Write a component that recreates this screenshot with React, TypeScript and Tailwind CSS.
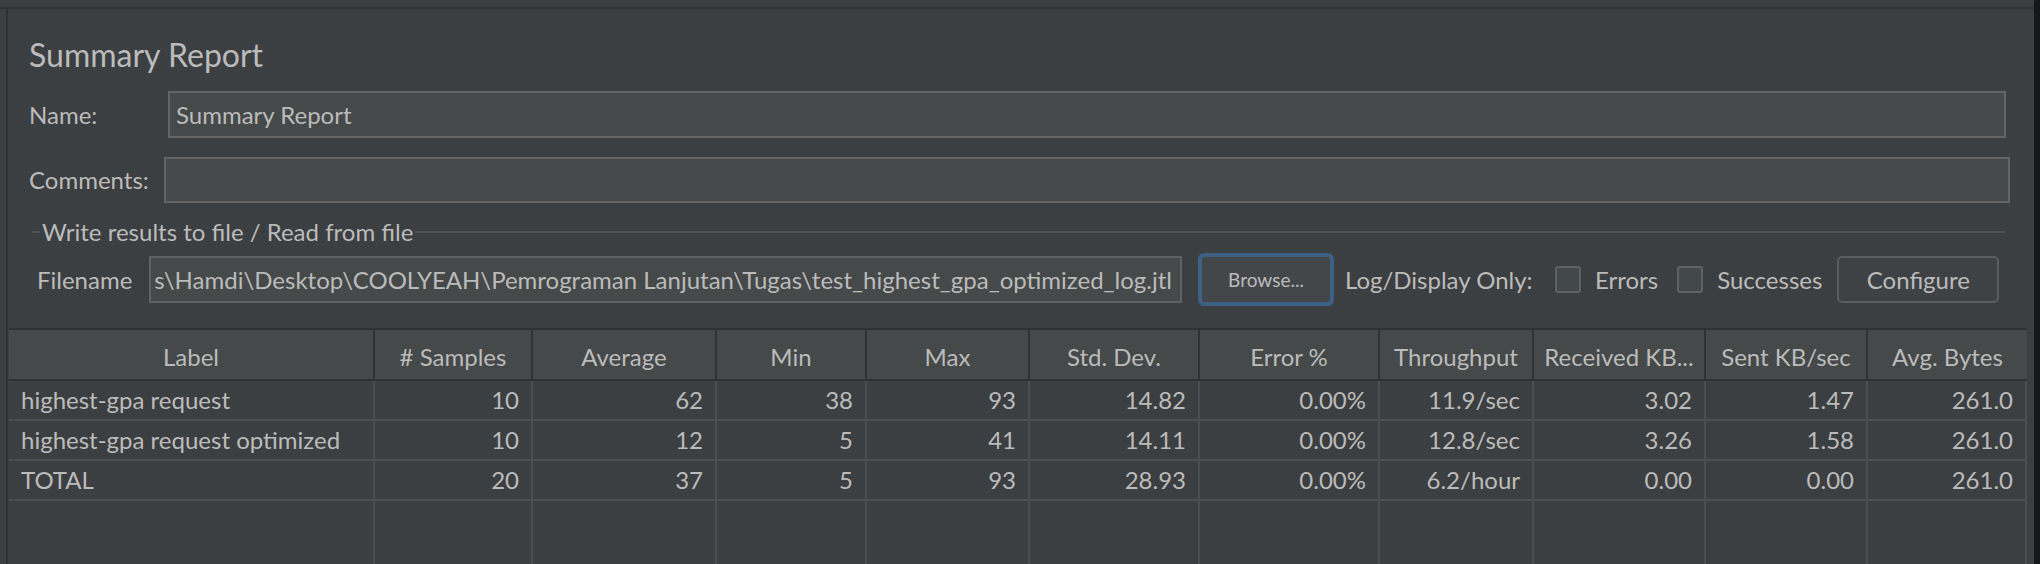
import React from 'react';

const columns = [
  { title: 'Label', width: 366 },
  { title: '# Samples', width: 158 },
  { title: 'Average', width: 184 },
  { title: 'Min', width: 150 },
  { title: 'Max', width: 163 },
  { title: 'Std. Dev.', width: 170 },
  { title: 'Error %', width: 180 },
  { title: 'Throughput', width: 154 },
  { title: 'Received KB...', width: 172 },
  { title: 'Sent KB/sec', width: 162 },
  { title: 'Avg. Bytes', width: 159 },
];

const rows = [
  ['highest-gpa request', '10', '62', '38', '93', '14.82', '0.00%', '11.9/sec', '3.02', '1.47', '261.0'],
  ['highest-gpa request optimized', '10', '12', '5', '41', '14.11', '0.00%', '12.8/sec', '3.26', '1.58', '261.0'],
  ['TOTAL', '20', '37', '5', '93', '28.93', '0.00%', '6.2/hour', '0.00', '0.00', '261.0'],
];

function Checkbox({ label }: { label: string }) {
  return (
    <div className="flex items-center">
      <span className="h-[27px] w-[26px] rounded-[3px] border-2 border-[#5e6265] bg-[#43494a]" />
      <span className="ml-[14px]">{label}</span>
    </div>
  );
}

export default function App() {
  return (
    <div
      className="flex h-[564px] w-[2040px] overflow-hidden bg-[#3c3f41] text-[24px] leading-none text-[#bbbbbb]"
      style={{ fontFamily: 'Lato, "Open Sans", sans-serif' }}
    >
      <div className="flex w-[2034px] flex-col">
        <div className="h-[7px]" />
        <div className="h-[2px] bg-[#2f3133]" />
        <div className="flex flex-1">
          <div className="w-[6px]" />
          <div className="flex flex-1 flex-col border-l-2 border-[#2f3133]">
            {/* title */}
            <div className="mt-[26px] flex h-[40px] items-center pl-[21px] text-[32px]">Summary Report</div>

            {/* name */}
            <div className="mt-[16px] flex h-[47px] items-center pl-[21px]">
              <span className="w-[139px]">Name:</span>
              <div className="flex h-full w-[1838px] items-center border-2 border-[#646464] bg-[#45494a] pl-[6px]">
                Summary Report
              </div>
            </div>

            {/* comments */}
            <div className="mt-[19px] flex h-[46px] items-center pl-[21px]">
              <span className="w-[135px]">Comments:</span>
              <div className="h-full w-[1846px] border-2 border-[#646464] bg-[#45494a]" />
            </div>

            {/* file group */}
            <div className="mt-[17px] flex h-[24px] items-center pl-[24px]">
              <span className="h-[2px] w-[8px] bg-[#515456]" />
              <span className="px-[2px]">Write results to file / Read from file</span>
              <span className="h-[2px] w-[1590px] bg-[#515456]" />
            </div>

            <div className="mt-[12px] flex h-[47px] items-center pl-[29px]">
              <span className="w-[112px]">Filename</span>
              <div className="flex h-full w-[1033px] items-center justify-end overflow-hidden whitespace-nowrap border-2 border-[#5f6162] bg-[#45494a] pr-[8px]">
                s\Hamdi\Desktop\COOLYEAH\Pemrograman Lanjutan\Tugas\test_highest_gpa_optimized_log.jtl
              </div>
              <button
                type="button"
                className="ml-[16px] flex h-[53px] w-[136px] items-center justify-center rounded-[6px] border-[4px] border-[#3d6185] bg-[#43474a] text-[19px] text-[#bbbbbb]"
              >
                Browse...
              </button>
              <span className="ml-[11px] w-[210px]">Log/Display Only:</span>
              <Checkbox label="Errors" />
              <div className="ml-[19px]">
                <Checkbox label="Successes" />
              </div>
              <button
                type="button"
                className="ml-[15px] flex h-[47px] w-[162px] items-center justify-center rounded-[5px] border-2 border-[#5a5d5f] bg-[#3f4244] text-[24px] text-[#bbbbbb]"
              >
                Configure
              </button>
            </div>

            {/* table */}
            <div className="ml-[1px] mt-[25px] flex w-[2018px] flex-1 flex-col">
              <div className="flex h-[53px] border-y-2 border-t-[#2f3234] border-b-[#2f3234] bg-[#45494a]">
                {columns.map((c, i) => (
                  <div
                    key={c.title}
                    className={
                      'flex shrink-0 items-center justify-center pt-[4px] ' +
                      (i < columns.length - 1 ? 'border-r-2 border-[#2f3234]' : '')
                    }
                    style={{ width: c.width }}
                  >
                    {c.title}
                  </div>
                ))}
              </div>
              {rows.map((r, ri) => (
                <div key={ri} className="flex h-[40px] border-b-2 border-[#4b4e50]">
                  {r.map((v, i) => (
                    <div
                      key={i}
                      className={
                        'flex shrink-0 items-center border-r-2 border-[#4b4e50] ' +
                        (i === 0 ? 'pl-[12px]' : 'justify-end pr-[12px]')
                      }
                      style={{ width: columns[i].width }}
                    >
                      {v}
                    </div>
                  ))}
                </div>
              ))}
              <div className="flex flex-1">
                {columns.map((c) => (
                  <div key={c.title} className="shrink-0 border-r-2 border-[#4b4e50]" style={{ width: c.width }} />
                ))}
              </div>
            </div>
          </div>
        </div>
      </div>
      <div className="w-[6px] bg-[#161718]" />
    </div>
  );
}
